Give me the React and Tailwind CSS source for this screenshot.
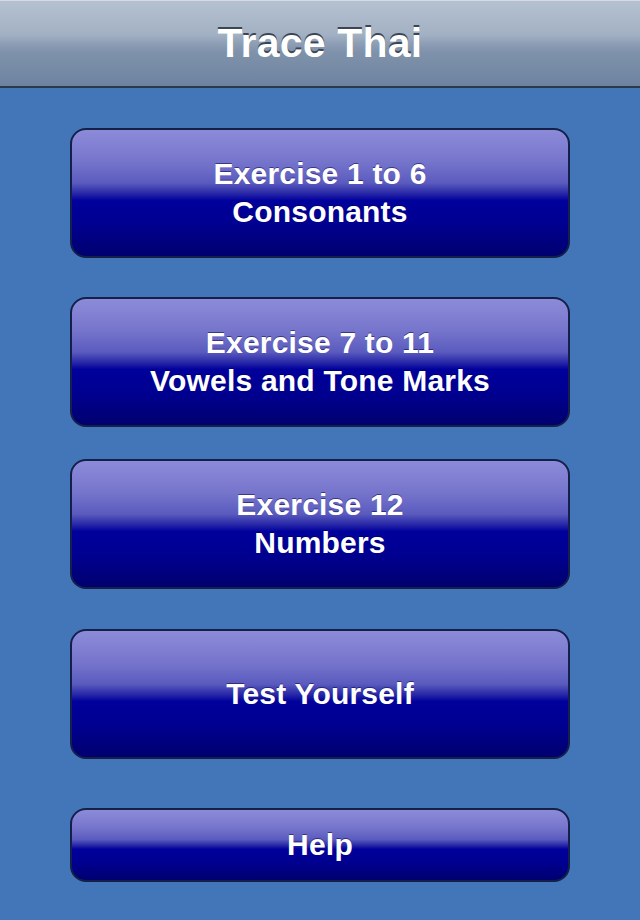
import React from "react";

const buttons = [
    { lines: ["Exercise 1 to 6", "Consonants"], className: "mt-[40px] h-[130px]" },
    { lines: ["Exercise 7 to 11", "Vowels and Tone Marks"], className: "mt-[39px] h-[130px]" },
    { lines: ["Exercise 12", "Numbers"], className: "mt-[32px] h-[130px]" },
    { lines: ["Test Yourself"], className: "mt-[40px] h-[130px]" },
    { lines: ["Help"], className: "mt-[49px] h-[74px]" },
];

const MenuButton = ({ lines, className }) => (
    <button
        className={`${className} w-[500px] mx-auto flex flex-col items-center justify-center rounded-[16px] border-2 border-[#14204a] bg-[linear-gradient(to_bottom,#8c8bd9_0%,#7675cc_25%,#5b5bbf_42%,#2a2aa8_50%,#00009c_56%,#000090_75%,#00006f_100%)] text-white font-bold text-[30px] tracking-[0.2px] leading-[38px] [text-shadow:0_-1px_0_rgba(0,0,60,0.5)]`}
    >
        {lines.map((line) => (
            <span key={line}>{line}</span>
        ))}
    </button>
);

const App = () => {
    return (
        <div className="w-[640px] h-[920px] bg-[#4276b8] flex flex-col font-['Liberation_Sans',Arial,sans-serif] overflow-hidden">
            {/* Title bar */}
            <header className="h-[88px] shrink-0 border-t border-[#d4dbe4] border-b-2 border-b-[#2c3946] bg-[linear-gradient(to_bottom,#b5c1d0_0%,#a2b0c3_40%,#8d9eb5_50%,#7f92ab_60%,#6d83a0_100%)] flex items-center justify-center">
                <h1 className="text-white font-bold text-[41px] tracking-[0.2px] leading-none [text-shadow:0_-2px_0_#3b4654]">
                    Trace Thai
                </h1>
            </header>

            {/* Menu */}
            <div className="flex flex-col">
                {buttons.map((b) => (
                    <MenuButton key={b.lines[0]} {...b} />
                ))}
            </div>
        </div>
    );
};

export default App;
